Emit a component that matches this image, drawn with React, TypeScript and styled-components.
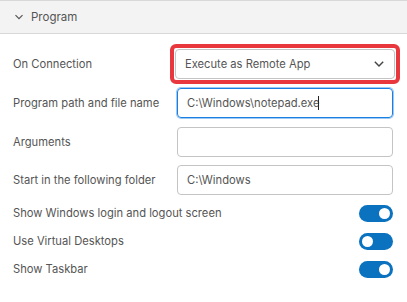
import React from "react";
import styled, { createGlobalStyle } from "styled-components";

const Global = createGlobalStyle`
  html, body { margin: 0; padding: 0; background: #fff; }
  body { font-family: Inter, "Noto Sans", sans-serif; font-size: 11.2px; color: #555; }
`;

const Panel = styled.div`
  width: 407px;
  display: flex;
  flex-direction: column;
`;

const Header = styled.div`
  height: 34px;
  box-sizing: border-box;
  background: #f3f3f3;
  border-top: 1px solid #d8d8d8;
  border-bottom: 1px solid #d8d8d8;
  display: flex;
  align-items: center;
  gap: 7px;
  padding-left: 14px;
  color: #555;
  font-size: 11.5px;
`;

const Body = styled.div`
  display: flex;
  flex-direction: column;
  padding: 10px 14px 0 13px;
`;

const FieldRow = styled.div<{ $h: number }>`
  display: grid;
  grid-template-columns: 164px 1fr;
  align-items: center;
  height: ${(p) => p.$h}px;
`;

const Label = styled.span`
  color: #555;
  white-space: nowrap;
`;

const Highlight = styled.div`
  border: 4px solid #e8383d;
  border-radius: 6px;
  padding: 1px;
  margin-left: -7px;
  margin-right: -7px;
`;

const Select = styled.div`
  height: 30px;
  box-sizing: border-box;
  border: 1px solid #c4c4c4;
  border-radius: 4px;
  display: flex;
  align-items: center;
  justify-content: space-between;
  padding: 0 9px 0 9px;
  color: #555;
`;

const Input = styled.div<{ $focused?: boolean }>`
  height: 30px;
  box-sizing: border-box;
  border: 1px solid ${(p) => (p.$focused ? "#1a7fe0" : "#c4c4c4")};
  box-shadow: ${(p) => (p.$focused ? "0 0 0 1px #9ccaf5" : "none")};
  border-radius: 4px;
  display: flex;
  align-items: center;
  padding: 0 9px;
  color: #555;
`;

const Caret = styled.span`
  display: inline-block;
  width: 1px;
  height: 14px;
  background: #222;
  margin-left: -1px;
`;

const ToggleRow = styled.div`
  display: flex;
  align-items: center;
  justify-content: space-between;
  height: 28px;
`;

const Toggle = styled.div<{ $on: boolean }>`
  width: 34px;
  height: 17px;
  border-radius: 9px;
  background: #0a72bf;
  position: relative;
  &::after {
    content: "";
    position: absolute;
    top: 3px;
    left: ${(p) => (p.$on ? "20px" : "3px")};
    width: 11px;
    height: 11px;
    border-radius: 50%;
    background: #fff;
  }
`;

const Chevron = ({ size = 10, color = "#555" }: { size?: number; color?: string }) => (
  <svg width={size} height={size} viewBox="0 0 10 10">
    <path d="M1.5 3.2 L5 6.7 L8.5 3.2" fill="none" stroke={color} strokeWidth="1.2" />
  </svg>
);

export default function App() {
  return (
    <>
      <Global />
      <Panel>
        <Header>
          <Chevron />
          <span>Program</span>
        </Header>
        <Body>
          <FieldRow $h={40}>
            <Label>On Connection</Label>
            <Highlight>
              <Select>
                <span>Execute as Remote App</span>
                <Chevron size={12} color="#444" />
              </Select>
            </Highlight>
          </FieldRow>
          <FieldRow $h={38}>
            <Label>Program path and file name</Label>
            <Input $focused>
              C:\Windows\notepad.exe
              <Caret />
            </Input>
          </FieldRow>
          <FieldRow $h={39}>
            <Label>Arguments</Label>
            <Input />
          </FieldRow>
          <FieldRow $h={38}>
            <Label>Start in the following folder</Label>
            <Input>C:\Windows</Input>
          </FieldRow>
          <ToggleRow>
            <Label>Show Windows login and logout screen</Label>
            <Toggle $on />
          </ToggleRow>
          <ToggleRow>
            <Label>Use Virtual Desktops</Label>
            <Toggle $on={false} />
          </ToggleRow>
          <ToggleRow>
            <Label>Show Taskbar</Label>
            <Toggle $on />
          </ToggleRow>
        </Body>
      </Panel>
    </>
  );
}
